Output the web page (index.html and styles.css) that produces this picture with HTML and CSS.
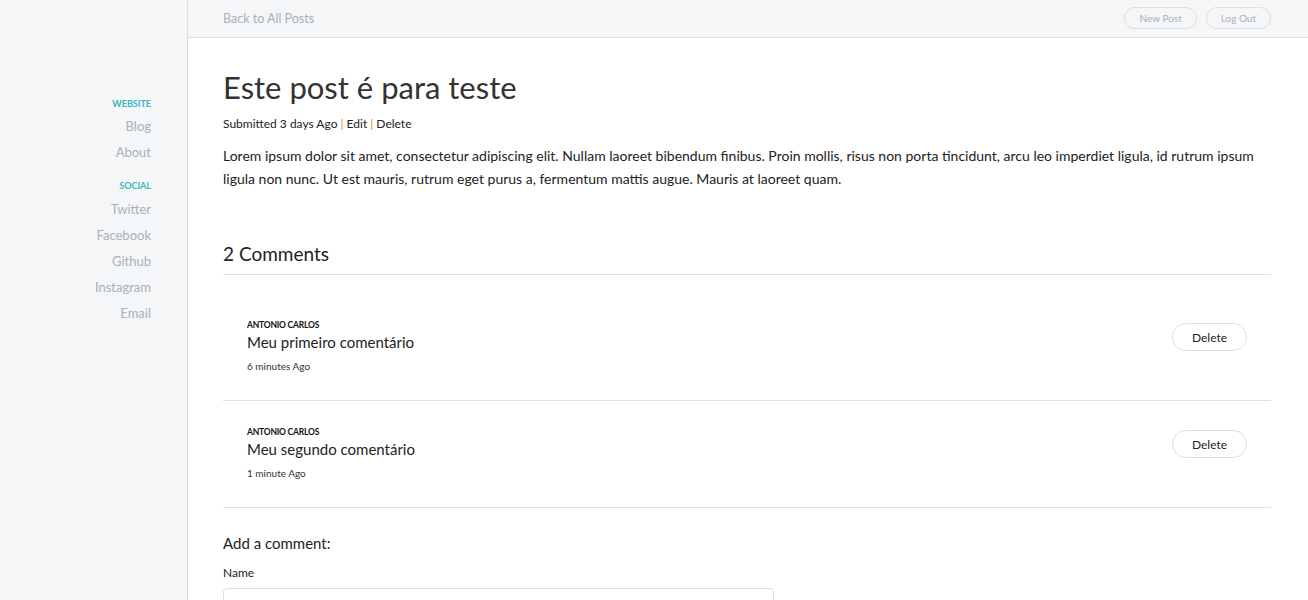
FILE: index.html
```html
<!DOCTYPE html>
<html lang="pt">
<head>
<meta charset="utf-8">
<title>Este post é para teste</title>
<link rel="stylesheet" href="styles.css">
</head>
<body>
<div class="layout">
  <aside class="sidebar">
    <nav class="side-nav">
      <div class="side-head">Website</div>
      <a class="side-link" href="#">Blog</a>
      <a class="side-link" href="#">About</a>
      <div class="side-head second">Social</div>
      <a class="side-link" href="#">Twitter</a>
      <a class="side-link" href="#">Facebook</a>
      <a class="side-link" href="#">Github</a>
      <a class="side-link" href="#">Instagram</a>
      <a class="side-link" href="#">Email</a>
    </nav>
  </aside>
  <div class="main">
    <header class="topbar">
      <a class="back" href="#">Back to All Posts</a>
      <div class="top-actions">
        <a class="pill small" href="#">New Post</a>
        <a class="pill small" href="#">Log Out</a>
      </div>
    </header>
    <article class="content">
      <h1 class="title">Este post é para teste</h1>
      <p class="meta">Submitted 3 days Ago <span class="sep">|</span> Edit <span class="sep">|</span> Delete</p>
      <p class="body">Lorem ipsum dolor sit amet, consectetur adipiscing elit. Nullam laoreet bibendum finibus. Proin mollis, risus non porta tincidunt, arcu leo imperdiet ligula, id rutrum ipsum ligula non nunc. Ut est mauris, rutrum eget purus a, fermentum mattis augue. Mauris at laoreet quam.</p>

      <h2 class="comments-title">2 Comments</h2>
      <div class="comments">
        <div class="comment">
          <div class="comment-text">
            <div class="author">Antonio Carlos</div>
            <div class="comment-body">Meu primeiro comentário</div>
            <div class="time">6 minutes Ago</div>
          </div>
          <a class="pill del" href="#">Delete</a>
        </div>
        <div class="comment">
          <div class="comment-text">
            <div class="author">Antonio Carlos</div>
            <div class="comment-body">Meu segundo comentário</div>
            <div class="time">1 minute Ago</div>
          </div>
          <a class="pill del" href="#">Delete</a>
        </div>
      </div>

      <form class="add-form">
        <h3 class="add-title">Add a comment:</h3>
        <label class="label" for="name">Name</label>
        <input class="input" id="name" type="text">
      </form>
    </article>
  </div>
</div>
</body>
</html>
```

FILE: styles.css
```css
* { box-sizing: border-box; }
html, body { margin: 0; padding: 0; }
body {
  font-family: "Lato", "Open Sans", sans-serif;
  color: #222;
  background: #fff;
}
a { text-decoration: none; color: inherit; }

.layout {
  display: flex;
  min-height: 600px;
}

.sidebar {
  width: 188px;
  flex: 0 0 188px;
  background: #f5f6f8;
  border-right: 1px solid #dcdfe3;
  padding: 98px 36px 0 0;
}
.side-nav {
  display: flex;
  flex-direction: column;
  align-items: flex-end;
}
.side-head {
  font-size: 9px;
  font-weight: 700;
  text-transform: uppercase;
  color: #3cb4c1;
  height: 12px;
  line-height: 12px;
  margin-bottom: 3px;
}
.side-head.second { margin-top: 15px; margin-bottom: 4px; }
.side-link {
  font-size: 13px;
  color: #a8b1ba;
  height: 26px;
  line-height: 26px;
}

.main {
  flex: 1;
  min-width: 0;
}
.topbar {
  height: 38px;
  background: #f5f6f8;
  border-bottom: 1px solid #dcdfe3;
  display: flex;
  align-items: center;
  justify-content: space-between;
  padding: 0 37px 1px 35px;
}
.back {
  font-size: 12.5px;
  color: #a8b1ba;
}
.top-actions {
  display: flex;
  gap: 9px;
}
.pill {
  display: inline-flex;
  align-items: center;
  justify-content: center;
  border: 1px solid #dcdfe3;
  border-radius: 999px;
  background: #fff;
}
.pill.small {
  height: 22px;
  padding: 0 14px;
  font-size: 10px;
  color: #a8b1ba;
  background: transparent;
}

.content {
  padding: 30px 37px 0 35px;
}
.title {
  margin: 0;
  font-size: 31px;
  font-weight: 400;
  color: #333;
  line-height: 38px;
}
.meta {
  margin: 9px 0 0;
  font-size: 12px;
  line-height: 18px;
  color: #222;
}
.sep { color: #e67e22; }
.body {
  margin: 11px 0 0;
  font-size: 14px;
  line-height: 23px;
  color: #222;
}
.comments-title {
  margin: 51px 0 0;
  font-size: 19px;
  font-weight: 400;
  line-height: 26px;
  padding-bottom: 7px;
  border-bottom: 1px solid #dcdfe3;
  color: #222;
}
.comments {
  padding-top: 19px;
}
.comment {
  display: flex;
  align-items: flex-start;
  justify-content: space-between;
  padding: 25px 24px 27px;
  border-bottom: 1px solid #dcdfe3;
}
.author {
  font-size: 8.5px;
  font-weight: 700;
  text-transform: uppercase;
  letter-spacing: -0.2px;
  color: #111;
  line-height: 12px;
}
.comment-body {
  font-size: 15px;
  line-height: 22px;
  color: #222;
  margin-top: 0;
}
.time {
  font-size: 10px;
  line-height: 14px;
  margin-top: 6px;
  color: #333;
}
.pill.del {
  margin-top: 4px;
  width: 75px;
  height: 28px;
  font-size: 12px;
  color: #222;
}

.add-form {
  padding-top: 25px;
}
.add-title {
  margin: 0;
  font-size: 15px;
  font-weight: 400;
  line-height: 20px;
  color: #222;
}
.label {
  display: block;
  margin-top: 12px;
  font-size: 12px;
  line-height: 16px;
  color: #222;
}
.input {
  display: block;
  margin-top: 7px;
  width: 551px;
  height: 34px;
  border: 1px solid #dcdfe3;
  border-radius: 4px;
  background: #fff;
}
```
